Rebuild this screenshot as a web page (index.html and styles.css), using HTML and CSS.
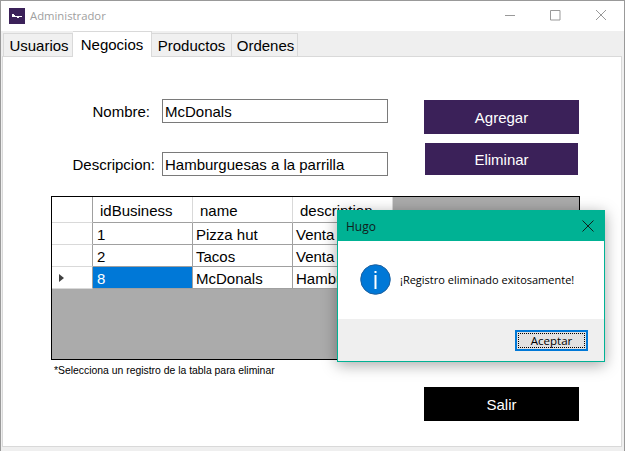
FILE: index.html
```html
<!DOCTYPE html>
<html>
<head>
    <title>Administrador</title>
    <link rel="stylesheet" href="styles.css">
</head>
<body>
    <div class="window">
        <div class="titlebar">
            <span class="app-icon">
                <svg width="10" height="4" viewBox="0 0 10 4"><path d="M0 0h2v1h1v1h7v1H7v1H5V3H0z" fill="#fff"/></svg>
            </span>
            <span class="title-text">Administrador</span>
            <div class="controls">
                <svg class="ctl" width="46" height="30" viewBox="0 0 46 30"><path d="M19 14.5h10" stroke="#999" fill="none"/></svg>
                <svg class="ctl" width="46" height="30" viewBox="0 0 46 30"><path d="M18.5 9.5h9.5v9.5h-9.5z" stroke="#999" fill="none"/></svg>
                <svg class="ctl" width="46" height="30" viewBox="0 0 46 30"><path d="M18 9l10 10M28 9l-10 10" stroke="#999" fill="none"/></svg>
            </div>
        </div>

        <div class="tabs">
            <div class="tab tab-users">Usuarios</div>
            <div class="tab tab-active">Negocios</div>
            <div class="tab tab-products">Productos</div>
            <div class="tab tab-orders">Ordenes</div>
        </div>

        <div class="panel">
            <div class="top">
                <div class="fields">
                    <div class="field field-name">
                        <label>Nombre:</label>
                        <div class="input">McDonals</div>
                    </div>
                    <div class="field field-desc">
                        <label>Descripcion:</label>
                        <div class="input">Hamburguesas a la parrilla</div>
                    </div>
                </div>
                <div class="actions">
                    <button class="btn btn-add">Agregar</button>
                    <button class="btn btn-del">Eliminar</button>
                </div>
            </div>

            <div class="grid">
                <table>
                    <tr class="head">
                        <th class="rowhead"></th>
                        <th>idBusiness</th>
                        <th>name</th>
                        <th>description</th>
                    </tr>
                    <tr>
                        <td class="rowhead"></td>
                        <td>1</td>
                        <td>Pizza hut</td>
                        <td>Venta</td>
                    </tr>
                    <tr>
                        <td class="rowhead"></td>
                        <td>2</td>
                        <td>Tacos</td>
                        <td>Venta</td>
                    </tr>
                    <tr>
                        <td class="rowhead"><span class="arrow"></span></td>
                        <td class="selected">8</td>
                        <td>McDonals</td>
                        <td>Hamburguesas</td>
                    </tr>
                </table>
            </div>
            <p class="hint">*Selecciona un registro de la tabla para eliminar</p>
            <button class="btn btn-exit">Salir</button>
        </div>

        <div class="dialog">
            <div class="dialog-title">
                <span>Hugo</span>
                <svg width="12" height="12" viewBox="0 0 12 12"><path d="M.5.5l11 11M11.5.5l-11 11" stroke="#10201c" fill="none"/></svg>
            </div>
            <div class="dialog-body">
                <svg width="31" height="31" viewBox="0 0 31 31">
                    <circle cx="15.5" cy="15.5" r="14.8" fill="#0078d7" stroke="#1c5f9e"/>
                    <rect x="14.5" y="11" width="2" height="14" fill="#fff"/>
                    <rect x="14.5" y="7" width="2" height="2" fill="#fff"/>
                </svg>
                <span>¡Registro eliminado exitosamente!</span>
            </div>
            <div class="dialog-foot">
                <button class="ok"><span>Aceptar</span></button>
            </div>
        </div>
    </div>
</body>
</html>
```

FILE: styles.css
```css
* {
    box-sizing: border-box;
}
body {
    margin: 0;
    font-family: "Liberation Sans", Arial, sans-serif;
    font-size: 15px;
    color: #000;
    background-color: #fff;
    overflow: hidden;
}
.window {
    position: relative;
    width: 625px;
    height: 451px;
    border: 1px solid #999;
    border-bottom: none;
    background-color: #efefef;
}
.titlebar {
    display: flex;
    align-items: center;
    height: 30px;
    padding-left: 8px;
    background-color: #fff;
}
.app-icon {
    display: flex;
    align-items: center;
    justify-content: center;
    width: 16px;
    height: 16px;
    background-color: #3b2159;
}
.title-text {
    margin-left: 5px;
    padding-bottom: 2px;
    font-family: "Open Sans", sans-serif;
    font-size: 11.3px;
    color: #a0a0a0;
}
.controls {
    display: flex;
    margin-left: auto;
}
.ctl {
    display: block;
}
.tabs {
    display: flex;
    align-items: flex-end;
    height: 25px;
    padding-left: 2px;
}
.tab {
    height: 23px;
    padding-top: 3px;
    text-align: center;
    background-color: #f0f0f0;
    border: 1px solid #d9d9d9;
    border-bottom: none;
    border-left: none;
}
.tab-users {
    width: 70px;
    padding-left: 2px;
    border-left: 1px solid #d9d9d9;
}
.tab-products {
    width: 80px;
}
.tab-orders {
    width: 66px;
    padding-left: 2px;
}
.tab-active {
    position: relative;
    z-index: 1;
    width: 79px;
    height: 26px;
    margin-bottom: -1px;
    padding-top: 4px;
    background-color: #fff;
}
.panel {
    height: 391px;
    margin: 0 2px 0 1px;
    padding: 42px 0 0 48px;
    background-color: #fff;
    border: 1px solid #d9d9d9;
}
.top {
    display: flex;
    height: 97px;
}
.fields {
    display: flex;
    flex-direction: column;
    gap: 29px;
    width: 337px;
}
.field {
    display: flex;
    align-items: center;
    justify-content: flex-end;
}
.field label {
    margin-right: 7px;
}
.field-name label {
    margin-right: 12px;
}
.input {
    width: 226px;
    height: 24px;
    padding: 3px 2px;
    background-color: #fff;
    border: 1px solid #7a7a7a;
    white-space: nowrap;
}
.actions {
    display: flex;
    flex-direction: column;
    align-items: center;
    width: 155px;
    margin-left: 36px;
    padding-top: 1px;
}
.btn {
    display: block;
    border: none;
    color: #fff;
    font-family: inherit;
    font-size: 15px;
    background-color: #3b2159;
}
.btn-add {
    width: 155px;
    height: 34px;
}
.btn-del {
    width: 153px;
    height: 32px;
    margin-top: 9px;
}
.grid {
    width: 529px;
    height: 164px;
    background-color: #ababab;
    border: 1px solid #000;
    overflow: hidden;
}
table {
    width: 341px;
    table-layout: fixed;
    border-collapse: separate;
    border-spacing: 0;
    background-color: #fff;
}
th, td {
    height: 22px;
    padding: 1px 3px 0;
    font-weight: normal;
    text-align: left;
    white-space: nowrap;
    overflow: hidden;
    border-right: 1px solid #a0a0a0;
    border-bottom: 1px solid #a0a0a0;
}
td:nth-child(2) {
    padding-left: 4px;
}
tr.head th {
    height: 26px;
    padding: 2px 0 0 7px;
    border-right-color: #d9d9d9;
}
.rowhead {
    width: 41px;
    border-bottom-color: #d9d9d9;
}
tr.head .rowhead {
    border-right-color: #a0a0a0;
}
tr.head th:nth-child(2) {
    width: 100px;
}
.selected {
    color: #fff;
    background-color: #0078d7;
}
.arrow {
    display: block;
    width: 0;
    height: 0;
    margin-left: 4px;
    border-top: 4.5px solid transparent;
    border-bottom: 4.5px solid transparent;
    border-left: 5px solid #404040;
}
.hint {
    margin: 4px 0 0 3px;
    font-size: 10.4px;
    line-height: 13px;
}
.btn-exit {
    width: 155px;
    height: 34px;
    margin: 10px 0 0 373px;
    background-color: #000;
}
.dialog {
    position: absolute;
    left: 336px;
    top: 209px;
    width: 268px;
    height: 152px;
    border: 1px solid #00b294;
    background-color: #efefef;
    box-shadow: 0 3px 14px rgba(0, 0, 0, 0.35);
    font-family: "Open Sans", sans-serif;
    font-size: 11px;
}
.dialog-title {
    display: flex;
    align-items: center;
    justify-content: space-between;
    height: 30px;
    padding: 0 10px 0 8px;
    background-color: #00b294;
    font-size: 12px;
    color: #10201c;
}
.dialog-body {
    display: flex;
    align-items: center;
    gap: 9px;
    height: 78px;
    padding: 0 0 2px 22px;
    background-color: #fff;
}
.dialog-foot {
    display: flex;
    justify-content: flex-end;
    padding: 11px 16px 0 0;
}
.ok {
    width: 73px;
    height: 21px;
    padding: 1px;
    border: 2px solid #0078d7;
    background-color: #e1e1e1;
    font-family: inherit;
    font-size: 11.5px;
}
.ok span {
    display: block;
    height: 100%;
    line-height: 13px;
    border: 1px dotted #000;
}
```
